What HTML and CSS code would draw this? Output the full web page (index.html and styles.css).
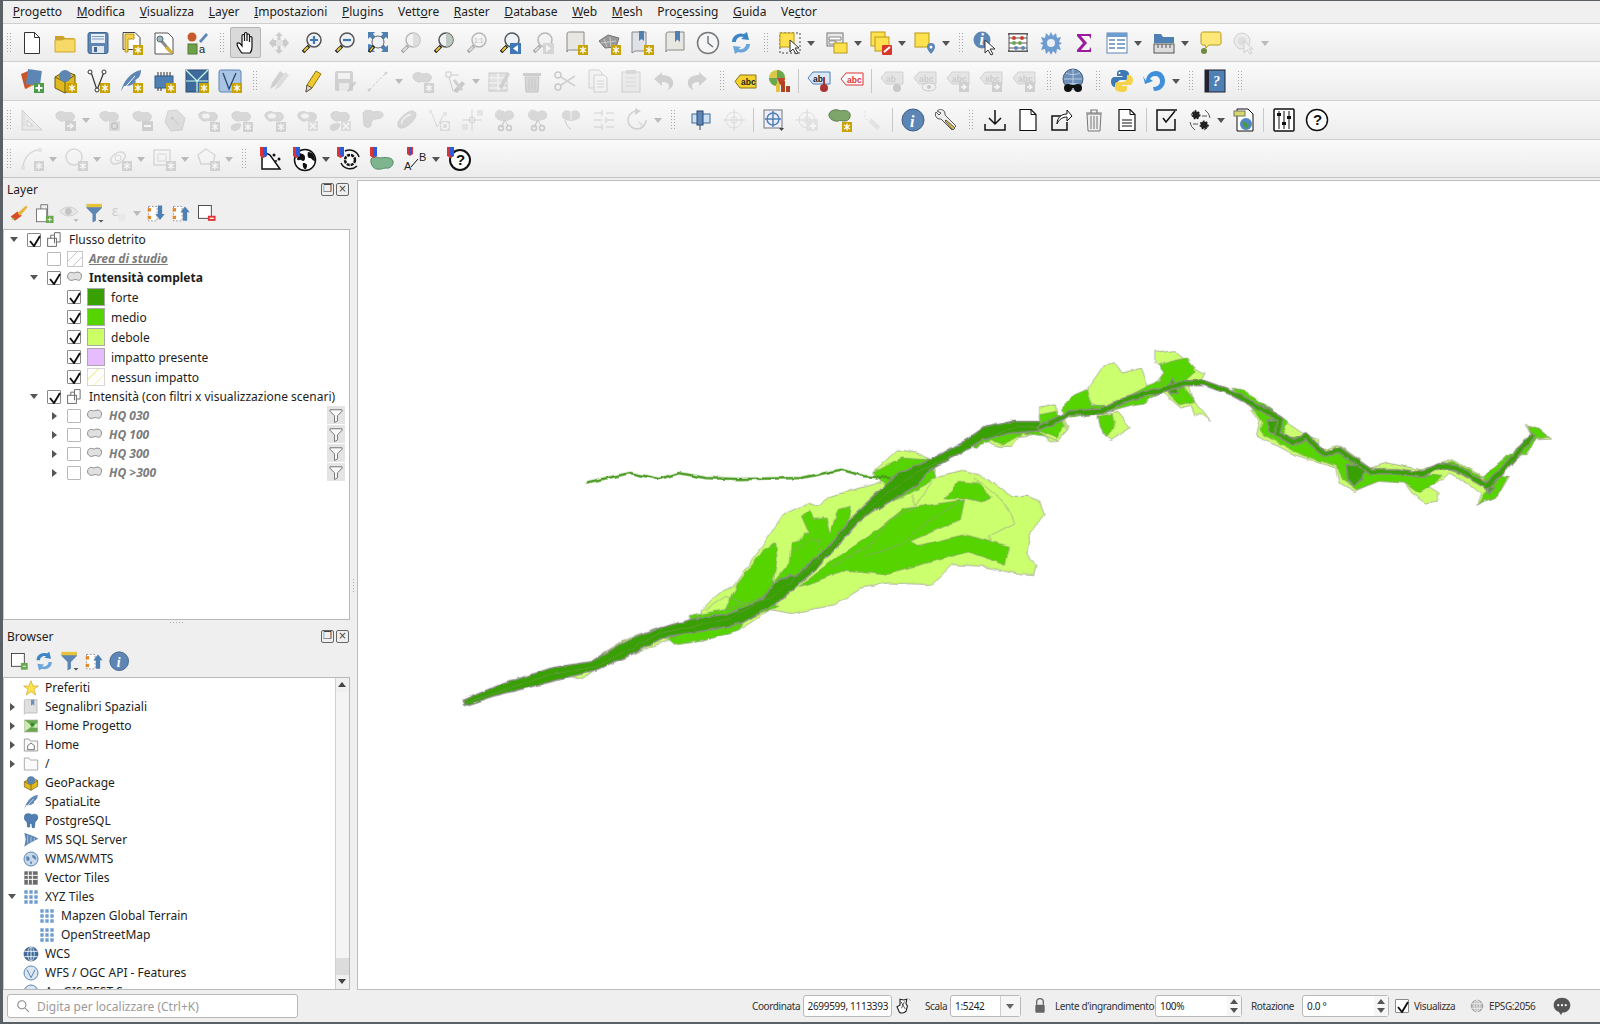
FILE: index.html
```html
<!DOCTYPE html>
<html lang="it">
<head>
    <meta charset="UTF-8">
    <title>QGIS</title>
    <link rel="stylesheet" href="styles.css">
</head>
<body>
<svg class="defs" width="0" height="0">
<defs>
    <!-- bordi irregolari della mappa -->
    <filter id="org" filterUnits="userSpaceOnUse" x="358" y="181" width="1242" height="809">
        <feTurbulence type="fractalNoise" baseFrequency=".09" numOctaves="2" seed="4" result="n"/>
        <feDisplacementMap in="SourceGraphic" in2="n" scale="4" xChannelSelector="R" yChannelSelector="G"/>
        <feGaussianBlur stdDeviation=".35"/>
    </filter>

    <!-- badges -->
    <g id="sb"><rect x="14" y="14" width="10" height="10" fill="#c9a300"/><path d="M19 15.500v7M16 17l6 4M22 17l-6 4" stroke="#fff" stroke-width="1.300"/></g>
    <g id="bl"><path d="M3 6c2-3 7-3 9-1 3-1 8-1 9 2 1 3-1 6-4 6-3 0-5-1-7 0-3 1-8-3-7-7z" fill="#aaa" stroke="#999"/></g>
    <g id="mag"><path d="M9 15L3 21" stroke="#222" stroke-width="3.500"/><path d="M8 16L4 20" stroke="#e8c23a" stroke-width="2"/><circle cx="14" cy="9" r="7" fill="#eef2f6" stroke="#555" stroke-width="1.500"/></g>

    <!-- row 1 -->
    <g id="new"><path d="M4.500 1.500h10l5 5v16h-15z" fill="#fff" stroke="#333"/><path d="M14.500 1.500v5h5" fill="none" stroke="#333"/></g>
    <g id="open"><path d="M2 5h8l2 2h9v4H2z" fill="#c9a227"/><path d="M2 21V9h7l2-1h11v13z" fill="#f6d966" stroke="#cfa92c"/></g>
    <g id="save"><rect x="2" y="1.500" width="20" height="21" rx="2" fill="#5d86b5" stroke="#40658f"/><rect x="5" y="3" width="14" height="9" fill="#e8eef5"/><path d="M6 5.500h12M6 8h12" stroke="#7d9cc0"/><rect x="6" y="15" width="12" height="7" fill="#dfe5ea"/><rect x="8" y="16" width="3" height="5" fill="#40658f"/></g>
    <g id="lnew"><path d="M4 1.500h12l5 5v12H4z" fill="#fff" stroke="#444"/><path d="M6 3v18h3V8h6V3z" fill="#f4cf4a" stroke="#b9961c"/><use href="#sb"/></g>
    <g id="lmgr"><path d="M3 2h13l5 5v16H3z" fill="#fff" stroke="#555"/><path d="M7 7l11 13" stroke="#8a8a8a" stroke-width="3"/><path d="M14 16l6 6" stroke="#d8b22c" stroke-width="3"/><circle cx="8" cy="8" r="3" fill="#9bb" stroke="#567"/></g>
    <g id="style"><circle cx="7" cy="6" r="4.500" fill="#c85a2e"/><path d="M14 10l7-8 2 2-7 8z" fill="#5d86b5"/><rect x="3" y="13" width="9" height="10" fill="#6ea04a" stroke="#4c7a30"/><text x="14" y="22" class="ic-t">a</text></g>
    <g id="pan"><path d="M8 22c-2-2-5-7-5-9 0-1.500 2-1.500 3-.5l2 2.500V5c0-2 2.500-2 2.500 0v5V3c0-2 2.500-2 2.500 0v7V4.500c0-2 2.500-2 2.500 0V11V7c0-2 2.500-2 2.500 0v9c0 3-1 5-2 6z" fill="#fff" stroke="#111" stroke-width="1.200"/></g>
    <g id="panto"><path d="M12 1l4 4h-2.500v4h4V6.500l4.500 5.500-4.500 5.500V15h-4v4H16l-4 4-4-4h2.500v-4h-4v2.500L2 12l4.500-5.500V9h4V5H8z" fill="#8d8d8d"/><rect x="9" y="9" width="7" height="6" fill="#ccc"/></g>
    <g id="zin"><use href="#mag"/><path d="M14 5v8M10 9h8" stroke="#3f78b5" stroke-width="2.200"/></g>
    <g id="zout"><use href="#mag"/><path d="M10 9h8" stroke="#3f78b5" stroke-width="2.200"/></g>
    <g id="zfull"><path d="M2 1h7L7 3l3 3-3 3-3-3-2 2zM22 1h-7l2 2-3 3 3 3 3-3 2 2zM22 21h-7l2-2-3-3 3-3 3 3 2-2z" fill="#4f80b3"/><path d="M2 13v8h7l-2-2 2-2-2-3z" fill="#4f80b3"/><circle cx="12" cy="11" r="6" fill="#eef2f6" stroke="#666"/><path d="M8 15L3 21" stroke="#222" stroke-width="3"/><path d="M7 16l-3 4" stroke="#e8c23a" stroke-width="1.600"/></g>
    <g id="zsel"><use href="#mag"/><path d="M14 2a7 7 0 0 1 0 14z" fill="#bbb"/></g>
    <g id="zlay"><use href="#mag"/><path d="M14 2a7 7 0 0 1 0 14z" fill="#bcc8c0"/></g>
    <g id="z11"><use href="#mag"/><text x="9" y="12" class="ic-t ic-s">1:1</text></g>
    <g id="zlast"><use href="#mag"/><rect x="12" y="12" width="11" height="11" fill="#3f78b5"/><path d="M20 14l-5 3.500 5 3.500z" fill="#fff"/></g>
    <g id="znext"><use href="#mag"/><rect x="12" y="12" width="11" height="11" fill="#aaa"/><path d="M15 14l5 3.500-5 3.500z" fill="#fff"/></g>
    <g id="scroll"><path d="M3 3c0-2 2-2 3-2h14v18H7c-2 0-4 0-4 2z" fill="#e8e6e0" stroke="#888"/><use href="#sb"/></g>
    <g id="map3d"><path d="M2 10l9-6 11 3-3 9-11 1z" fill="#999" stroke="#777"/><path d="M7 8l3 8M13 6l1 10M4 12l15-2" stroke="#ccc"/><use href="#sb"/></g>
    <g id="bmnew"><path d="M2 1h14v19H5l-3 2z" fill="#dfe3e8" stroke="#888"/><path d="M9 0h5v10l-2.500-2L9 10z" fill="#4f80b3"/><use href="#sb"/></g>
    <g id="bms"><path d="M3 3c0-2 2-2 3-2h15v18H7c-2 0-4 0-4 2z" fill="#e8e6e0" stroke="#888"/><path d="M12 0h5v11l-2.500-2.500L12 11z" fill="#4f80b3"/></g>
    <g id="clock"><circle cx="12" cy="12" r="10.500" fill="#f3f5f7" stroke="#777" stroke-width="1.500"/><path d="M12 5v7l5 4" fill="none" stroke="#666" stroke-width="1.300"/></g>
    <g id="refresh"><path d="M3 11C3 5 9 1 15 3l3-2 2 8-8-1 2.500-2C11 5 7 7 7 11z" fill="#3c86c6"/><path d="M21 13c0 6-6 10-12 8l-3 2-2-8 8 1-2.500 2c3.500 1 7.500-1 7.500-5z" fill="#6aa6da"/></g>
    <g id="sel"><rect x="2" y="2" width="20" height="20" fill="none" stroke="#444" stroke-dasharray="2 2"/><rect x="2" y="2" width="14" height="14" fill="#ffe14d" stroke="#b79a1a"/><path d="M12 9v12l3-3 3 5 2-1-3-5h4z" fill="#fff" stroke="#333"/></g>
    <g id="self"><rect x="2" y="2" width="16" height="13" fill="#e8e8e8" stroke="#777"/><path d="M4 6h12v3H4zM4 10h7v3H4z" fill="#fff" stroke="#888"/><rect x="9" y="12" width="13" height="10" fill="#ffe14d" stroke="#b79a1a"/></g>
    <g id="desel"><rect x="2" y="1" width="14" height="14" fill="#ffe14d" stroke="#b79a1a"/><rect x="6" y="6" width="14" height="14" fill="#ffe14d" stroke="#b79a1a"/><rect x="13" y="14" width="10" height="10" rx="1" fill="#d8382c"/><path d="M15 21l6-5" stroke="#fff" stroke-width="2"/></g>
    <g id="selloc"><rect x="2" y="2" width="14" height="14" fill="#ffe14d" stroke="#b79a1a"/><path d="M18 12a4 4 0 0 1 4 4c0 3-4 7-4 7s-4-4-4-7a4 4 0 0 1 4-4z" fill="#5d86b5"/><circle cx="18" cy="16" r="1.500" fill="#fff"/></g>
    <g id="ident"><circle cx="9" cy="9" r="8.500" fill="#5d86b5"/><text x="6.500" y="14" class="ic-w">i</text><path d="M12 9v13l3-3 3 5 2-1-3-5h5z" fill="#fff" stroke="#333"/></g>
    <g id="abacus"><path d="M2 3h20M2 20h20" stroke="#333" stroke-width="1.500"/><rect x="3" y="3" width="18" height="17" fill="#fff" stroke="#555"/><path d="M3 7h18M3 12h18M3 17h18" stroke="#555"/><circle cx="8" cy="7" r="2" fill="#c8412f"/><circle cx="16" cy="7" r="2" fill="#c8412f"/><circle cx="8" cy="12" r="2" fill="#6aa84f"/><circle cx="14" cy="12" r="2" fill="#6aa84f"/><circle cx="10" cy="17" r="2" fill="#5d86b5"/><circle cx="17" cy="17" r="2" fill="#5d86b5"/></g>
    <g id="gear"><path d="M12 1l2 4 3-3 1 5 4-1-2 5 3 1-3 2 2 5-4-1-1 5-3-3-2 4-2-4-3 3-1-5-4 1 2-5-3-2 3-1-2-5 4 1 1-5 3 3z" fill="#6d9cd0"/><circle cx="12" cy="12" r="4" fill="#eaf0f7"/></g>
    <g id="sigma"><path d="M5 3h14v5l-2-3H9l6 7-6 7h8l2-3v5H5v-2l6-7-6-7z" fill="#9b1aa0"/></g>
    <g id="table"><rect x="2" y="2" width="20" height="20" fill="#fff" stroke="#5d86b5"/><rect x="2" y="2" width="20" height="4" fill="#6d9cd0"/><path d="M4 9h6M4 13h6M4 17h6M12 9h8M12 13h8M12 17h8" stroke="#5d86b5" stroke-width="1.500"/></g>
    <g id="meas"><path d="M2 3h7l2 3h11v6H2z" fill="#4f80b3"/><rect x="2" y="13" width="20" height="9" fill="#ddd" stroke="#555"/><path d="M6 13v4M10 13v4M14 13v4M18 13v4" stroke="#555"/></g>
    <g id="tip"><path d="M2 3c0-1 1-2 2-2h16c1 0 2 1 2 2v9c0 1-1 2-2 2H10l-3 3-1-3H4c-1 0-2-1-2-2z" fill="#ffe87a" stroke="#b39a1a"/><circle cx="5" cy="20" r="3" fill="#6f8a3c"/></g>
    <g id="meta"><circle cx="10" cy="10" r="8" fill="#ddd" stroke="#999"/><circle cx="10" cy="10" r="4" fill="#bbb"/><path d="M12 10v12l3-3 3 4 2-1-3-4h4z" fill="#eee" stroke="#999"/></g>

    <!-- row 2 -->
    <g id="dsm"><path d="M3 6l9-3 2 13-8 4z" fill="#e08a2c"/><path d="M1 5l7-3 3 14-6 4z" fill="#c8552b"/><rect x="7" y="1" width="14" height="15" fill="#5d86b5" transform="rotate(8 14 8)"/><rect x="14" y="14" width="10" height="10" fill="#4f9a4a"/><path d="M19 15.500v7M15.500 19h7" stroke="#fff" stroke-width="2"/></g>
    <g id="gpkg"><path d="M2 8l10-6 10 4v12l-10 6-10-5z" fill="#e0b81f" stroke="#6b5a10"/><path d="M2 8l10 5 10-7M12 13v11" fill="none" stroke="#6b5a10"/><circle cx="12" cy="7" r="6" fill="#5d86b5"/><use href="#sb"/></g>
    <g id="shp"><path d="M5 3l6 18 7-18" fill="none" stroke="#333" stroke-width="1.200"/><circle cx="4" cy="3" r="2" fill="#fff" stroke="#333"/><circle cx="18" cy="3" r="2" fill="#fff" stroke="#333"/><circle cx="11" cy="21" r="2" fill="#fff" stroke="#333"/><use href="#sb"/></g>
    <g id="feather"><path d="M2 23C4 12 12 3 22 1c0 6-3 9-6 10 1 1 1 2 0 3-4 3-8 3-11 3z" fill="#5d86b5"/><path d="M2 23L16 7" stroke="#fff"/><use href="#sb"/></g>
    <g id="chip"><rect x="3" y="7" width="18" height="12" fill="#4f80b3" stroke="#2e5a8a"/><path d="M6 3v4M9 3v4M12 3v4M15 3v4M18 3v4M6 19v3M9 19v3" stroke="#333"/><use href="#sb"/></g>
    <g id="mesh"><rect x="1" y="1" width="22" height="22" fill="#3f6b9c" stroke="#2a4a70"/><path d="M1 1l11 11L23 1M1 12h22M12 12v11" fill="none" stroke="#cfe" stroke-width="1.200"/><use href="#sb"/></g>
    <g id="virt"><rect x="1" y="1" width="22" height="22" rx="2" fill="#a9c4e4" stroke="#5d86b5"/><path d="M5 4l6 16 7-16" fill="none" stroke="#2a4a70" stroke-width="1.300"/><use href="#sb"/></g>
    <g id="pens"><path d="M3 20l2-6L13 2l4 3-9 12z" fill="#999"/><path d="M8 21l2-6 8-12 4 3-9 12z" fill="#bbb"/></g>
    <g id="pencil"><path d="M6 23l1-7L16 2l5 3-9 14z" fill="#f1c92e" stroke="#8a7416"/><path d="M6 23l1-7 5 3z" fill="#e8d8b8" stroke="#555"/></g>
    <g id="sedit"><rect x="2" y="2" width="18" height="20" rx="2" fill="#999"/><rect x="5" y="4" width="12" height="6" fill="#eee"/><rect x="6" y="14" width="10" height="8" fill="#ddd"/><path d="M14 22l8-10 1 2-8 9z" fill="#888"/></g>
    <g id="line"><path d="M3 21L20 4" stroke="#888" stroke-dasharray="3 2"/><circle cx="3" cy="21" r="1.500" fill="#999"/><circle cx="20" cy="4" r="1.500" fill="#999"/></g>
    <g id="blobs"><use href="#bl"/><use href="#sb"/></g>
    <g id="vtool"><path d="M3 3h5v5H3zM8 6h8M6 8l4 14" fill="none" stroke="#888"/><path d="M10 22l9-10 3 3-8 9z" fill="#888"/><path d="M11 11l8 10" stroke="#999" stroke-width="3"/></g>
    <g id="tedit"><rect x="2" y="4" width="18" height="18" fill="#c8c6b8" stroke="#888"/><path d="M2 9h18M2 14h18M2 19h18M11 4v18" stroke="#fff"/><path d="M12 18l8-15 3 2-8 15z" fill="#999"/></g>
    <g id="trash"><path d="M3 4h18v3H3z" fill="#a88"/><path d="M5 8h14l-1 15H6z" fill="#c4a8a0" stroke="#977"/><path d="M9 10v11M12 10v11M15 10v11" stroke="#977"/></g>
    <g id="cut"><circle cx="5" cy="6" r="3" fill="none" stroke="#888" stroke-width="1.500"/><circle cx="5" cy="18" r="3" fill="none" stroke="#888" stroke-width="1.500"/><path d="M8 8l14 9M8 16l14-9" stroke="#999" stroke-width="1.500"/></g>
    <g id="copy"><path d="M3 1h10l3 3v15H3z" fill="#eee" stroke="#999"/><path d="M8 6h10l3 3v14H8z" fill="#f4f4f4" stroke="#999"/><path d="M11 12h7M11 15h7M11 18h7" stroke="#aaa"/></g>
    <g id="paste"><rect x="3" y="3" width="18" height="20" fill="#ddd" stroke="#999"/><rect x="7" y="1" width="10" height="4" fill="#aaa"/><path d="M7 9h10M7 13h10M7 17h10" stroke="#aaa"/></g>
    <g id="undo"><path d="M10 3L2 10l8 7v-4c4 0 7 1 7 4 0 2-1 3-2 4 4-1 7-4 6-9-1-4-6-6-11-6z" fill="#999"/></g>
    <g id="redo"><path d="M14 3l8 7-8 7v-4c-4 0-7 1-7 4 0 2 1 3 2 4-4-1-7-4-6-9 1-4 6-6 11-6z" fill="#999"/></g>
    <g id="labelabc"><path d="M6 6h16v13H6l-5-6.500z" fill="#f4d22e" stroke="#8a7416"/><text x="7" y="16" class="ic-t ic-b">abc</text></g>
    <g id="diag"><circle cx="10" cy="9" r="8" fill="#d8c84a"/><path d="M10 9V1a8 8 0 0 1 8 8z" fill="#6aa84f"/><path d="M10 9h8a8 8 0 0 1-5 7z" fill="#c8412f"/><path d="M10 9v8a8 8 0 0 1-8-8z" fill="#6aa84f"/><rect x="9" y="15" width="4" height="8" fill="#e8c23a"/><rect x="14" y="12" width="4" height="11" fill="#a42"/><rect x="19" y="17" width="4" height="6" fill="#a42"/></g>
    <g id="abpin"><path d="M6 3h17v12H6l-5-6z" fill="#d8e8f8" stroke="#4f80b3"/><text x="6" y="13" class="ic-t ic-b">ab</text><path d="M17 8v9" stroke="#a33" stroke-width="2"/><circle cx="17" cy="19" r="4" fill="#a33"/></g>
    <g id="abcred"><path d="M6 4h17v12H6l-5-6z" fill="#fff" stroke="#d33"/><text x="7" y="14" class="ic-t ic-b ic-r">abc</text></g>
    <g id="aboff"><path d="M6 3h17v12H6l-5-6z" fill="#ccc" stroke="#999"/><text x="6" y="13" class="ic-t ic-b ic-g">ab</text><circle cx="17" cy="19" r="4" fill="#888"/></g>
    <g id="aboff2"><path d="M6 3h17v12H6l-5-6z" fill="#ccc" stroke="#999"/><text x="6" y="13" class="ic-t ic-b ic-g">abc</text><ellipse cx="16" cy="18" rx="7" ry="4" fill="#eee" stroke="#888"/><circle cx="16" cy="18" r="2" fill="#888"/></g>
    <g id="aboff3"><path d="M6 3h17v12H6l-5-6z" fill="#ccc" stroke="#999"/><text x="6" y="13" class="ic-t ic-b ic-g">abc</text><rect x="13" y="13" width="10" height="10" fill="#999"/><path d="M15 18h4M17 15.500l3 2.500-3 2.500" fill="none" stroke="#fff" stroke-width="1.500"/></g>
    <g id="globebin"><circle cx="12" cy="10" r="10" fill="#6d8fb8" stroke="#3f6088"/><path d="M3 10h18M12 0v20M5 4c4 2 10 2 14 0M5 16c4-2 10-2 14 0" stroke="#b8cce0" fill="none"/><circle cx="7" cy="19" r="4" fill="#111"/><circle cx="17" cy="19" r="4" fill="#111"/><rect x="9" y="16" width="6" height="3" fill="#111"/></g>
    <g id="python"><path d="M12 1C7 1 7 3 7 5v2h5.500v1H5C2 8 1 10 1 13s2 5 4 5h2v-3c0-2 2-4 4-4h5c2 0 3-1 3-3V5c0-2-2-4-7-4z" fill="#3d7ab5"/><path d="M12 23c5 0 5-2 5-4v-2h-5v-1h7c3 0 4-2 4-5s-2-5-4-5h-2v3c0 2-2 4-4 4H8c-2 0-3 1-3 3v3c0 2 2 4 7 4z" fill="#f4d24a"/><circle cx="9.500" cy="4" r="1" fill="#fff"/></g>
    <g id="pluginre"><path d="M3 12C3 6 8 2 13 2s9 4 9 10c0 5-4 10-11 10l-1-4c4 0 7-2 7-6 0-3-2-5-5-5-2 0-4 1-5 3l3 2-8 3-2-8z" fill="#3f8fdb"/></g>
    <g id="helpbook"><rect x="2" y="1" width="20" height="22" fill="#4f80b3" stroke="#223"/><rect x="2" y="1" width="4" height="22" fill="#223"/><text x="10" y="17" class="ic-w ic-wm">?</text></g>

    <!-- row 3 -->
    <g id="ruler"><path d="M2 2v20h20z" fill="#ddd" stroke="#999"/><path d="M7 12v6h6z" fill="#f4f4f4" stroke="#999"/><path d="M3 5h2M3 8h2M3 11h2M3 14h2M3 17h2" stroke="#999"/></g>
    <g id="bmove"><use href="#bl"/><rect x="12" y="13" width="11" height="10" fill="#999"/><path d="M14 18h5M17 15.500l3 2.500-3 2.500" fill="none" stroke="#fff" stroke-width="1.500"/></g>
    <g id="brot"><use href="#bl"/><rect x="12" y="13" width="11" height="10" fill="#bbb"/><circle cx="17.500" cy="18" r="3" fill="none" stroke="#777" stroke-width="1.500"/></g>
    <g id="bscale"><use href="#bl"/><rect x="12" y="13" width="11" height="10" fill="#999"/><path d="M14 18h7" stroke="#fff" stroke-width="2"/></g>
    <g id="hex"><path d="M5 3l9-1 8 8-3 12-11 1-6-9z" fill="#bbb" stroke="#999"/><path d="M9 10l7 7" stroke="#888"/><circle cx="9" cy="10" r="1.500" fill="#888"/></g>
    <g id="ring"><use href="#bl"/><ellipse cx="10" cy="8" rx="4" ry="2.500" fill="#eee"/><use href="#sb"/></g>
    <g id="part"><use href="#bl"/><path d="M2 18c2-3 8-4 10-2 1 3-3 7-6 7-3 0-5-2-4-5z" fill="#aaa"/><use href="#sb"/></g>
    <g id="ringx"><use href="#bl"/><ellipse cx="10" cy="8" rx="4" ry="2.500" fill="#eee"/><rect x="13" y="13" width="10" height="10" fill="#bbb"/><path d="M15 15l6 6M21 15l-6 6" stroke="#fff" stroke-width="1.500"/></g>
    <g id="partx"><use href="#bl"/><path d="M2 18c2-3 8-4 10-2 1 3-3 7-6 7-3 0-5-2-4-5z" fill="#aaa"/><rect x="13" y="13" width="10" height="10" fill="#bbb"/><path d="M15 15l6 6M21 15l-6 6" stroke="#fff" stroke-width="1.500"/></g>
    <g id="reshape"><path d="M2 5c2-4 8-3 10-1 3-1 9-1 10 2 1 4-5 5-8 5-2 0-4 3-4 6 0 3-6 3-7 0z" fill="#aaa" stroke="#999"/></g>
    <g id="offs"><path d="M4 18C2 12 14 2 19 3s3 7-1 11-12 9-14 4z" fill="#aaa" stroke="#999"/><path d="M8 16C6 13 14 6 17 7" fill="none" stroke="#eee" stroke-width="1.500"/></g>
    <g id="vproc"><path d="M4 3l6 16 7-13" fill="none" stroke="#aaa"/><rect x="2" y="2" width="3" height="3" fill="#ccc"/><rect x="16" y="4" width="4" height="4" fill="#ccc"/><rect x="13" y="13" width="10" height="10" fill="#bbb"/><circle cx="18" cy="18" r="3" fill="none" stroke="#fff" stroke-width="1.500"/></g>
    <g id="split"><path d="M12 1v22M2 12h20" stroke="#aaa"/><circle cx="12" cy="12" r="3" fill="none" stroke="#999"/><rect x="17" y="2" width="6" height="6" fill="#ccc"/><rect x="2" y="16" width="6" height="6" fill="#ccc"/></g>
    <g id="scis"><path d="M7 2c-4 0-5 4-4 7 1 2 4 4 8 3 0 3-3 5-3 8" fill="none" stroke="#888"/><path d="M3 6c1-4 6-5 9-2 3-3 8-2 9 2s-2 6-9 7C5 12 2 10 3 6z" fill="#aaa"/><circle cx="8" cy="20" r="2.500" fill="none" stroke="#888" stroke-width="1.500"/><circle cx="16" cy="20" r="2.500" fill="none" stroke="#888" stroke-width="1.500"/><path d="M9 18l3-6 3 6" fill="none" stroke="#888"/></g>
    <g id="scis2"><path d="M3 6c1-4 6-5 9-2 3-3 8-2 9 2s-2 6-9 7C5 12 2 10 3 6z" fill="#aaa"/><path d="M12 4v8" stroke="#eee"/><path d="M6 12c1 4 3 8 6 9" fill="none" stroke="#888"/></g>
    <g id="rows"><path d="M2 5h8M14 5h8M2 12h8M14 12h8M2 19h8M14 19h8M10 2v6M14 9v6M10 16v6" stroke="#999"/></g>
    <g id="curve"><path d="M12 3a9 9 0 1 0 9 9" fill="none" stroke="#999" stroke-width="1.500"/><path d="M10 0l6 3-6 4z" fill="#999"/><path d="M12 12l7 5-3 1z" fill="#bbb"/></g>
    <g id="align"><rect x="3" y="6" width="18" height="9" fill="#cfe0f0" stroke="#3f6b9c"/><rect x="8" y="3" width="6" height="14" fill="#5d86b5" stroke="#2a4a70"/><path d="M11 17v5" stroke="#2a4a70"/></g>
    <g id="cross"><circle cx="12" cy="12" r="8" fill="none" stroke="#bbb"/><path d="M12 1v22M1 12h22" stroke="#aaa"/><circle cx="12" cy="12" r="3" fill="none" stroke="#bbb"/></g>
    <g id="snapg"><rect x="2" y="2" width="18" height="18" fill="#eef" stroke="#777"/><circle cx="11" cy="11" r="6" fill="none" stroke="#4f80b3" stroke-width="1.500"/><path d="M11 3v16M3 11h16" stroke="#4f80b3" stroke-width="1.500"/><path d="M17 20h5l-2.500 3z" fill="#444"/></g>
    <g id="crossp"><use href="#cross"/><rect x="13" y="13" width="10" height="10" fill="#ccc"/><path d="M18 15v6M15 18h6" stroke="#fff" stroke-width="2"/></g>
    <g id="gblob"><path d="M1 6c2-5 9-5 11-3 3-1 9-1 10 3 1 4-2 7-5 7-3 0-5-1-7 0-3 1-10-2-9-7z" fill="#7ea56a" stroke="#5a7d4a"/><use href="#sb"/></g>
    <g id="dpath"><path d="M4 3v7l8 8" fill="none" stroke="#bbb" stroke-dasharray="2 2"/><path d="M10 10l9 9-3 3-8-8z" fill="#ccc"/></g>
    <g id="info"><circle cx="12" cy="12" r="11" fill="#5d86b5" stroke="#3f6088"/><text x="9" y="19" class="ic-w">i</text></g>
    <g id="wrench"><path d="M3 3c2-2 5-2 7 0 1 1 1 3 1 4l11 11-4 4L7 11c-1 0-3 0-4-1C1 8 1 6 2 4l3 3 2-2z" fill="#eee" stroke="#555"/><path d="M12 12l9 8-2 2-8-9z" fill="#e8c23a" stroke="#555"/></g>
    <g id="down"><path d="M12 2v14M6 10l6 6 6-6M2 16v6h20v-6" fill="none" stroke="#111" stroke-width="1.500"/></g>
    <g id="doc"><path d="M4 1.500h11l5 5v16H4z" fill="#fff" stroke="#111" stroke-width="1.200"/><path d="M15 1.500v5h5" fill="none" stroke="#111"/></g>
    <g id="share"><path d="M16 8H3v14h15V14" fill="none" stroke="#111" stroke-width="1.500"/><path d="M8 16c0-6 4-10 10-10V2l5 6-5 5V9c-4 0-8 2-10 7z" fill="#fff" stroke="#111"/></g>
    <g id="bin"><path d="M4 5h16M9 5V2h6v3" fill="none" stroke="#777" stroke-width="1.200"/><path d="M5 6h14l-1 17H6z" fill="#eee" stroke="#777"/><path d="M9 8v13M12 8v13M15 8v13" stroke="#777"/></g>
    <g id="doct"><use href="#doc"/><path d="M7 12h10M7 15h10M7 18h10" stroke="#111" stroke-width="1.200"/></g>
    <g id="check"><path d="M20 11v11H2V2h20" fill="none" stroke="#111" stroke-width="1.500"/><path d="M8 10l3 4 9-11" fill="none" stroke="#111" stroke-width="1.500"/></g>
    <g id="bugs"><path d="M17 2a11 11 0 0 1 5 8M7 22a11 11 0 0 1-5-8M3 7a11 11 0 0 1 5-5M21 17a11 11 0 0 1-5 5" fill="none" stroke="#555"/><circle cx="8" cy="7" r="3.500" fill="#222" stroke="#222" stroke-dasharray="1.500 1.500" stroke-width="2"/><circle cx="16" cy="17" r="3.500" fill="#222" stroke="#222" stroke-dasharray="1.500 1.500" stroke-width="2"/><path d="M14 8h5M5 16h5" stroke="#555"/></g>
    <g id="gdoc"><path d="M5 1h11l5 5v17H5z" fill="#fff" stroke="#111"/><rect x="2" y="3" width="11" height="5" fill="#d8d86a" stroke="#776"/><circle cx="14" cy="16" r="6" fill="#4f88c8"/><path d="M10 14c3-2 4 2 6 2s0 4-2 5z" fill="#4c9a3c"/></g>
    <g id="slid"><rect x="2" y="1" width="20" height="22" rx="1" fill="#fff" stroke="#111" stroke-width="1.500"/><path d="M7 3v18M12 3v18M17 3v18" stroke="#111"/><rect x="5" y="5" width="4" height="3" fill="#111"/><rect x="10" y="14" width="4" height="3" fill="#111"/><rect x="15" y="8" width="4" height="3" fill="#111"/></g>
    <g id="qhelp"><circle cx="12" cy="12" r="10.500" fill="#fff" stroke="#111" stroke-width="1.500"/><text x="8" y="17" class="ic-k">?</text></g>

    <!-- row 4 -->
    <g id="arcv"><path d="M3 22C3 11 10 3 20 3" fill="none" stroke="#aaa" stroke-width="1.500"/><rect x="1" y="19" width="4" height="4" fill="#ccc"/><rect x="18" y="1" width="4" height="4" fill="#ccc"/><use href="#sb"/></g>
    <g id="circ"><circle cx="10" cy="10" r="8" fill="none" stroke="#aaa" stroke-width="1.500"/><use href="#sb"/></g>
    <g id="ell"><ellipse cx="10" cy="11" rx="8" ry="5" fill="none" stroke="#aaa" stroke-width="1.500" transform="rotate(-30 10 11)"/><circle cx="10" cy="11" r="3" fill="none" stroke="#aaa"/><use href="#sb"/></g>
    <g id="rect"><rect x="2" y="3" width="16" height="15" fill="none" stroke="#aaa" stroke-width="1.500"/><rect x="6" y="7" width="8" height="7" fill="none" stroke="#aaa"/><use href="#sb"/></g>
    <g id="reg"><path d="M10 2l9 6-2 9H5L2 8z" fill="none" stroke="#aaa" stroke-width="1.500"/><use href="#sb"/></g>
    <g id="rib"><path d="M0 0h7v9l-3.500 2L0 9z" fill="#d33"/><path d="M3 0h4v9l-2 1-2-2z" fill="#2a5bdc"/></g>
    <g id="rterrain"><path d="M2 4v18h18L10 8z" fill="#fff" stroke="#111" stroke-width="1.500"/><circle cx="14" cy="8" r="1.500" fill="#111"/><circle cx="19" cy="12" r="1.500" fill="#111"/><circle cx="16" cy="14" r="1" fill="#111"/><use href="#rib"/></g>
    <g id="rglobe"><circle cx="12" cy="13" r="10.500" fill="#fff" stroke="#111" stroke-width="1.500"/><path d="M6 6c4 1 6 1 6 5s-3 3-4 2-3 2-4-1zM15 5c5 0 7 4 7 9-3 0-3-3-5-3s-3-2-2-6zM10 16c4 0 5 2 3 6-2 1-4-3-3-6z" fill="#111"/><use href="#rib"/></g>
    <g id="rgear"><circle cx="13" cy="13" r="5" fill="#fff" stroke="#111" stroke-width="2.500" stroke-dasharray="3 1"/><path d="M4 16a10 10 0 0 0 16 3M22 10A10 10 0 0 0 8 4" fill="none" stroke="#111" stroke-width="1.500"/><use href="#rib"/></g>
    <g id="rblob"><path d="M1 12c2-3 6-2 9-1 4-1 12-1 13 3s-3 8-7 7c-4 0-5 2-9 1-4 0-7-6-6-10z" fill="#7fb58e" stroke="#5a8a6a"/><use href="#rib"/></g>
    <g id="rab"><path d="M4 0h6v7l-3 2-3-2z" fill="#d33"/><path d="M6 0h3v7l-2 1-1-1z" fill="#2a5bdc"/><text x="1" y="23" class="ic-t">A</text><path d="M8 20L15 12" stroke="#111"/><text x="16" y="14" class="ic-t">B</text></g>
    <g id="rq"><circle cx="13" cy="13" r="10" fill="#fff" stroke="#111" stroke-width="2"/><text x="9" y="18" class="ic-k">?</text><use href="#rib"/></g>

    <!-- panels -->
    <g id="brush"><path d="M2 16l8-6 5 5-8 6z" fill="#d84a2a"/><path d="M10 12L20 3l2 2-9 10z" fill="#e8b43a"/><path d="M3 19l4-1" stroke="#6c3"/></g>
    <g id="addgroup"><rect x="3" y="7" width="12" height="15" fill="#fff" stroke="#666"/><path d="M8 7V2h8v14h-1" fill="none" stroke="#666"/><rect x="14" y="15" width="9" height="9" fill="#6aa84f"/><path d="M18.500 17v5M16 19.500h5" stroke="#fff"/></g>
    <g id="eye"><path d="M1 10c6-7 15-7 21 0-6 7-15 7-21 0z" fill="#ddd" stroke="#888"/><circle cx="11" cy="10" r="4" fill="#5d86b5"/><path d="M17 19h6l-3 3z" fill="#555"/></g>
    <g id="filter"><path d="M3 3h18v3l-7 7v8l-4 2V13L3 6z" fill="#5d86b5"/><path d="M3 1h18v4H3z" fill="#e8c23a"/><path d="M17 20h6l-3 3z" fill="#555"/></g>
    <g id="eps"><text x="3" y="15" class="ic-e">ε</text><rect x="11" y="13" width="8" height="8" fill="#ddd"/></g>
    <g id="expand"><rect x="3" y="4" width="10" height="17" fill="#fff" stroke="#888" stroke-dasharray="2 2"/><rect x="2" y="6" width="4" height="4" fill="#e08a2c"/><rect x="2" y="15" width="4" height="4" fill="#e08a2c"/><path d="M14 3h5v10h3l-5.500 7-5.500-7h3z" fill="#4f80b3"/></g>
    <g id="collapse"><rect x="3" y="4" width="10" height="17" fill="#fff" stroke="#888" stroke-dasharray="2 2"/><rect x="2" y="6" width="4" height="4" fill="#e08a2c"/><rect x="2" y="15" width="4" height="4" fill="#e08a2c"/><path d="M14 21h5V11h3l-5.500-7-5.500 7h3z" fill="#4f80b3"/></g>
    <g id="rmlayer"><rect x="3" y="3" width="15" height="15" fill="#fff" stroke="#333"/><rect x="14" y="15" width="9" height="6" fill="#d33"/><path d="M16 18h5" stroke="#fff" stroke-width="1.500"/></g>
    <g id="addfav"><rect x="3" y="3" width="15" height="15" fill="#fff" stroke="#333"/><rect x="14" y="14" width="8" height="8" fill="#6aa84f"/><path d="M16 18h4" stroke="#fff"/></g>
    <g id="groupic"><rect x="1" y="10" width="14" height="13" fill="#fff" stroke="#666" stroke-width="1.500"/><path d="M6 10V5h6v13M12 6V1h9v15h-6" fill="none" stroke="#666" stroke-width="1.500"/></g>
    <g id="polyic"><path d="M1 9c1-6 7-6 10-4 3-2 11-3 12 3 1 6-3 10-6 8-3-1-5-1-7 0-4 2-10-1-9-7z" fill="#e0e0e0" stroke="#8a8a8a" stroke-width="1.600"/></g>
    <g id="funnel"><path d="M4 5h16v2l-6 6v7l-4 2v-9L4 7z" fill="#f8f8f8" stroke="#777" stroke-width="1.300"/></g>
    <g id="star"><path d="M12 1l3 8h8l-6.500 5 2.500 8.500L12 17.500 5 22.500 7.500 14 1 9h8z" fill="#ffe14d" stroke="#c9a227"/></g>
    <g id="bmk"><path d="M2 3c0-1 1-2 2-2h17v20H5c-2 0-3 1-3 2z" fill="#e0e0e0" stroke="#aaa"/><path d="M12 1h5v9l-2.500-2-2.500 2z" fill="#6d8fb8"/></g>
    <g id="hprog"><rect x="2" y="3" width="20" height="18" fill="#6aa84f" stroke="#aaa"/><path d="M2 3l12 9-12 9zM12 14l10-7v8z" fill="#cde8b0"/><circle cx="14" cy="10" r="3" fill="#2e8b2e"/></g>
    <g id="home"><path d="M2 3h7l2 3h11v15H2z" fill="#fafafa" stroke="#777"/><path d="M7 13l5-4 5 4v6H7z" fill="#fff" stroke="#333"/></g>
    <g id="fold"><path d="M2 3h7l2 3h11v15H2z" fill="#fafafa" stroke="#888"/></g>
    <g id="pkg"><path d="M2 10l10-6 10 4v9l-10 6-10-5z" fill="#e0b81f" stroke="#6b5a10"/><path d="M2 10l10 5 10-7M12 15v8" fill="none" stroke="#6b5a10"/><circle cx="12" cy="8" r="6" fill="#5d86b5"/></g>
    <g id="feat"><path d="M2 23C4 12 12 3 22 1c0 6-3 9-6 10 1 1 1 2 0 3-4 3-8 3-11 3z" fill="#5d86b5"/><path d="M2 23L16 7" stroke="#fff"/></g>
    <g id="pg"><path d="M3 3c3-3 8-2 10 0 3-2 9-2 9 3 0 4-2 6-4 7l-1 9h-3l-1-7-3 1v5H7l-1-8C3 12 1 8 3 3z" fill="#4f7fb3" stroke="#2e5a8a"/></g>
    <g id="mssql"><path d="M2 1c7 3 16 5 21 9-5 3-13 6-21 12l2-11z" fill="#5d86b5"/><path d="M7 5v12M12 7v9M17 9v5" stroke="#cfe0f0"/></g>
    <g id="wms"><circle cx="12" cy="12" r="10.500" fill="#c8d8e8" stroke="#5d86b5" stroke-width="1.500"/><path d="M5 8c3 0 5 1 5 4s-2 2-3 3-3-3-2-7zM14 6c4 0 6 3 6 7-2 0-3-1-4-2s-3-1-2-5zM11 15c2 0 3 2 2 5-2 0-3-2-2-5z" fill="#5d86b5"/></g>
    <g id="vtile"><rect x="2" y="2" width="20" height="20" fill="#6a6a6a"/><path d="M2 8h20M2 14h20M8 2v20M14 2v20" stroke="#fff" stroke-width="1.500"/></g>
    <g id="xyz"><path d="M2 2h5v5H2zM9.500 2h5v5h-5zM17 2h5v5h-5zM2 9.500h5v5H2zM9.500 9.500h5v5h-5zM17 9.500h5v5h-5zM2 17h5v5H2zM9.500 17h5v5h-5zM17 17h5v5h-5z" fill="#6d9cd0"/></g>
    <g id="wcs"><circle cx="12" cy="12" r="10.500" fill="#3f6b9c" stroke="#2a4a70"/><path d="M2 8h20M2 16h20M12 2v20" stroke="#fff" stroke-width="1.300"/><ellipse cx="12" cy="12" rx="5" ry="10.500" fill="none" stroke="#fff"/></g>
    <g id="wfs"><circle cx="12" cy="12" r="10.500" fill="#dce6f0" stroke="#5d86b5" stroke-width="1.500"/><path d="M6 7l6 12 6-12" fill="none" stroke="#5d86b5" stroke-width="1.500"/></g>
    <g id="noclick"><path d="M8 3l5 1 4-1-1 6 2 3-2 7c-3 3-7 3-9 1L4 13l4-2z" fill="#fff" stroke="#222" stroke-width="1.500"/><path d="M9 6l6 10M14 6l-4 9" stroke="#222"/><path d="M19 2l3 3" stroke="#888"/></g>
    <g id="lock"><path d="M7 10V6a5 5 0 0 1 10 0v4" fill="none" stroke="#666" stroke-width="2"/><rect x="5" y="10" width="14" height="12" rx="1.500" fill="#666"/></g>
    <g id="globe"><circle cx="12" cy="12" r="10" fill="#bbb" stroke="#777"/><path d="M2 8h20M2 16h20M12 2v20" stroke="#fff"/><ellipse cx="12" cy="12" rx="5" ry="10" fill="none" stroke="#fff"/></g>
    <g id="msg"><path d="M12 2c6 0 10 4 10 9s-4 9-10 9l-1 3-3-4c-3-1-6-4-6-8 0-5 4-9 10-9z" fill="#555"/><circle cx="7.500" cy="11" r="1.300" fill="#fff"/><circle cx="12" cy="11" r="1.300" fill="#fff"/><circle cx="16.500" cy="11" r="1.300" fill="#fff"/></g>
    <g id="chk"><path d="M3 8l4 5 6-10" fill="none" stroke="#111" stroke-width="1.900"/></g>
</defs>
</svg>

<div class="app">
    <div class="menubar">
        <span><u>P</u>rogetto</span><span><u>M</u>odifica</span><span><u>V</u>isualizza</span><span><u>L</u>ayer</span><span><u>I</u>mpostazioni</span><span><u>P</u>lugins</span><span>Vett<u>o</u>re</span><span><u>R</u>aster</span><span><u>D</u>atabase</span><span><u>W</u>eb</span><span><u>M</u>esh</span><span>Pro<u>c</u>essing</span><span><u>G</u>uida</span><span>Ve<u>c</u>tor</span>
    </div>

    <div class="toolbar top">
        <i class="grip"></i>
        <b class="btn"><svg><use href="#new"/></svg></b><b class="btn"><svg><use href="#open"/></svg></b><b class="btn"><svg><use href="#save"/></svg></b><b class="btn"><svg><use href="#lnew"/></svg></b><b class="btn"><svg><use href="#lmgr"/></svg></b><b class="btn"><svg><use href="#style"/></svg></b>
        <i class="grip"></i>
        <b class="btn active"><svg><use href="#pan"/></svg></b><b class="btn off"><svg><use href="#panto"/></svg></b><b class="btn"><svg><use href="#zin"/></svg></b><b class="btn"><svg><use href="#zout"/></svg></b><b class="btn"><svg><use href="#zfull"/></svg></b><b class="btn off"><svg><use href="#zsel"/></svg></b><b class="btn"><svg><use href="#zlay"/></svg></b><b class="btn off"><svg><use href="#z11"/></svg></b><b class="btn"><svg><use href="#zlast"/></svg></b><b class="btn off"><svg><use href="#znext"/></svg></b><b class="btn"><svg><use href="#scroll"/></svg></b><b class="btn"><svg><use href="#map3d"/></svg></b><b class="btn"><svg><use href="#bmnew"/></svg></b><b class="btn"><svg><use href="#bms"/></svg></b><b class="btn"><svg><use href="#clock"/></svg></b><b class="btn"><svg><use href="#refresh"/></svg></b>
        <i class="grip"></i>
        <b class="btn"><svg><use href="#sel"/></svg></b><i class="dd wide"></i><b class="btn"><svg><use href="#self"/></svg></b><i class="dd"></i><b class="btn"><svg><use href="#desel"/></svg></b><i class="dd"></i><b class="btn"><svg><use href="#selloc"/></svg></b><i class="dd"></i>
        <i class="grip"></i>
        <b class="btn"><svg><use href="#ident"/></svg></b><b class="btn"><svg><use href="#abacus"/></svg></b><b class="btn"><svg><use href="#gear"/></svg></b><b class="btn"><svg><use href="#sigma"/></svg></b><b class="btn"><svg><use href="#table"/></svg></b><i class="dd wide"></i><b class="btn"><svg><use href="#meas"/></svg></b><i class="dd wide"></i><b class="btn"><svg><use href="#tip"/></svg></b><b class="btn off"><svg><use href="#meta"/></svg></b><i class="dd off"></i>
    </div>

    <div class="toolbar">
        <i class="grip hide"></i>
        <b class="btn"><svg><use href="#dsm"/></svg></b><b class="btn"><svg><use href="#gpkg"/></svg></b><b class="btn"><svg><use href="#shp"/></svg></b><b class="btn"><svg><use href="#feather"/></svg></b><b class="btn"><svg><use href="#chip"/></svg></b><b class="btn"><svg><use href="#mesh"/></svg></b><b class="btn"><svg><use href="#virt"/></svg></b>
        <i class="grip"></i>
        <b class="btn off"><svg><use href="#pens"/></svg></b><b class="btn"><svg><use href="#pencil"/></svg></b><b class="btn off"><svg><use href="#sedit"/></svg></b><b class="btn off"><svg><use href="#line"/></svg></b><i class="dd off"></i><b class="btn off"><svg><use href="#blobs"/></svg></b><b class="btn off"><svg><use href="#vtool"/></svg></b><i class="dd off"></i><b class="btn off"><svg><use href="#tedit"/></svg></b><b class="btn off"><svg><use href="#trash"/></svg></b><b class="btn off"><svg><use href="#cut"/></svg></b><b class="btn off"><svg><use href="#copy"/></svg></b><b class="btn off"><svg><use href="#paste"/></svg></b><b class="btn off"><svg><use href="#undo"/></svg></b><b class="btn off"><svg><use href="#redo"/></svg></b>
        <i class="grip"></i>
        <b class="btn"><svg><use href="#labelabc"/></svg></b><b class="btn"><svg><use href="#diag"/></svg></b><i class="sep"></i><b class="btn"><svg><use href="#abpin"/></svg></b><b class="btn"><svg><use href="#abcred"/></svg></b><i class="sep"></i><b class="btn off"><svg><use href="#aboff"/></svg></b><b class="btn off"><svg><use href="#aboff2"/></svg></b><b class="btn off"><svg><use href="#aboff3"/></svg></b><b class="btn off"><svg><use href="#aboff3"/></svg></b><b class="btn off"><svg><use href="#aboff3"/></svg></b>
        <i class="grip"></i>
        <b class="btn"><svg><use href="#globebin"/></svg></b>
        <i class="grip"></i>
        <b class="btn"><svg><use href="#python"/></svg></b><b class="btn"><svg><use href="#pluginre"/></svg></b><i class="dd"></i>
        <i class="grip"></i>
        <b class="btn"><svg><use href="#helpbook"/></svg></b>
        <i class="grip"></i>
    </div>

    <div class="toolbar">
        <i class="grip"></i>
        <b class="btn off"><svg><use href="#ruler"/></svg></b><b class="btn off"><svg><use href="#bmove"/></svg></b><i class="dd off"></i><b class="btn off"><svg><use href="#brot"/></svg></b><b class="btn off"><svg><use href="#bscale"/></svg></b><b class="btn off"><svg><use href="#hex"/></svg></b><b class="btn off"><svg><use href="#ring"/></svg></b><b class="btn off"><svg><use href="#part"/></svg></b><b class="btn off"><svg><use href="#ring"/></svg></b><b class="btn off"><svg><use href="#ringx"/></svg></b><b class="btn off"><svg><use href="#partx"/></svg></b><b class="btn off"><svg><use href="#reshape"/></svg></b><b class="btn off"><svg><use href="#offs"/></svg></b><b class="btn off"><svg><use href="#vproc"/></svg></b><b class="btn off"><svg><use href="#split"/></svg></b><b class="btn off"><svg><use href="#scis"/></svg></b><b class="btn off"><svg><use href="#scis"/></svg></b><b class="btn off"><svg><use href="#scis2"/></svg></b><b class="btn off"><svg><use href="#rows"/></svg></b><b class="btn off"><svg><use href="#curve"/></svg></b><i class="dd off"></i>
        <i class="grip wide"></i>
        <b class="btn"><svg><use href="#align"/></svg></b><b class="btn off"><svg><use href="#cross"/></svg></b><i class="sep"></i><b class="btn"><svg><use href="#snapg"/></svg></b><b class="btn off"><svg><use href="#crossp"/></svg></b><b class="btn"><svg><use href="#gblob"/></svg></b><b class="btn off"><svg><use href="#dpath"/></svg></b><i class="sep"></i><b class="btn"><svg><use href="#info"/></svg></b><b class="btn"><svg><use href="#wrench"/></svg></b>
        <i class="grip"></i>
        <b class="btn"><svg><use href="#down"/></svg></b><b class="btn"><svg><use href="#doc"/></svg></b><b class="btn"><svg><use href="#share"/></svg></b><b class="btn"><svg><use href="#bin"/></svg></b><b class="btn"><svg><use href="#doct"/></svg></b><i class="sep"></i><b class="btn"><svg><use href="#check"/></svg></b><b class="btn"><svg><use href="#bugs"/></svg></b><i class="dd"></i><b class="btn"><svg><use href="#gdoc"/></svg></b><i class="sep"></i><b class="btn"><svg><use href="#slid"/></svg></b><b class="btn"><svg><use href="#qhelp"/></svg></b>
    </div>

    <div class="toolbar last">
        <i class="grip"></i>
        <b class="btn off"><svg><use href="#arcv"/></svg></b><i class="dd off"></i><b class="btn off"><svg><use href="#circ"/></svg></b><i class="dd off"></i><b class="btn off"><svg><use href="#ell"/></svg></b><i class="dd off"></i><b class="btn off"><svg><use href="#rect"/></svg></b><i class="dd off"></i><b class="btn off"><svg><use href="#reg"/></svg></b><i class="dd off"></i>
        <i class="grip wide"></i>
        <b class="btn"><svg><use href="#rterrain"/></svg></b><b class="btn"><svg><use href="#rglobe"/></svg></b><i class="dd"></i><b class="btn"><svg><use href="#rgear"/></svg></b><b class="btn"><svg><use href="#rblob"/></svg></b><b class="btn"><svg><use href="#rab"/></svg></b><i class="dd"></i><b class="btn"><svg><use href="#rq"/></svg></b>
    </div>

    <div class="main">
        <div class="side">
            <div class="dock-title"><span>Layer</span><em class="dock-btn">❐</em><em class="dock-btn">×</em></div>
            <div class="dock-tools">
                <b class="tool"><svg><use href="#brush"/></svg></b><b class="tool"><svg><use href="#addgroup"/></svg></b><b class="tool off"><svg><use href="#eye"/></svg></b><b class="tool"><svg><use href="#filter"/></svg></b><b class="tool off"><svg><use href="#eps"/></svg></b><i class="dd off tight"></i><b class="tool"><svg><use href="#expand"/></svg></b><b class="tool"><svg><use href="#collapse"/></svg></b><b class="tool"><svg><use href="#rmlayer"/></svg></b>
            </div>
            <div class="tree layer-tree">
                <div class="row lv0"><i class="arr open"></i><i class="cb on"><svg><use href="#chk"/></svg></i><svg class="ti" viewBox="0 0 24 24"><use href="#groupic"/></svg><span>Flusso detrito</span></div>
                <div class="row lv1"><i class="arr none"></i><i class="cb"></i><i class="hatch"></i><span class="dim under">Area di studio</span></div>
                <div class="row lv1"><i class="arr open"></i><i class="cb on"><svg><use href="#chk"/></svg></i><svg class="ti" viewBox="0 0 24 24"><use href="#polyic"/></svg><span class="strong">Intensità completa</span></div>
                <div class="leg"><i class="cb on"><svg><use href="#chk"/></svg></i><i class="sw forte"></i><span>forte</span></div>
                <div class="leg"><i class="cb on"><svg><use href="#chk"/></svg></i><i class="sw medio"></i><span>medio</span></div>
                <div class="leg"><i class="cb on"><svg><use href="#chk"/></svg></i><i class="sw debole"></i><span>debole</span></div>
                <div class="leg"><i class="cb on"><svg><use href="#chk"/></svg></i><i class="sw impatto"></i><span>impatto presente</span></div>
                <div class="leg"><i class="cb on"><svg><use href="#chk"/></svg></i><i class="sw nessun"></i><span>nessun impatto</span></div>
                <div class="row lv1"><i class="arr open"></i><i class="cb on"><svg><use href="#chk"/></svg></i><svg class="ti" viewBox="0 0 24 24"><use href="#groupic"/></svg><span>Intensità (con filtri x visualizzazione scenari)</span></div>
                <div class="row lv2"><i class="arr shut"></i><i class="cb"></i><svg class="ti" viewBox="0 0 24 24"><use href="#polyic"/></svg><span class="dim">HQ 030</span><em class="ind"><svg viewBox="0 0 24 24"><use href="#funnel"/></svg></em></div>
                <div class="row lv2"><i class="arr shut"></i><i class="cb"></i><svg class="ti" viewBox="0 0 24 24"><use href="#polyic"/></svg><span class="dim">HQ 100</span><em class="ind"><svg viewBox="0 0 24 24"><use href="#funnel"/></svg></em></div>
                <div class="row lv2"><i class="arr shut"></i><i class="cb"></i><svg class="ti" viewBox="0 0 24 24"><use href="#polyic"/></svg><span class="dim">HQ 300</span><em class="ind"><svg viewBox="0 0 24 24"><use href="#funnel"/></svg></em></div>
                <div class="row lv2"><i class="arr shut"></i><i class="cb"></i><svg class="ti" viewBox="0 0 24 24"><use href="#polyic"/></svg><span class="dim">HQ &gt;300</span><em class="ind"><svg viewBox="0 0 24 24"><use href="#funnel"/></svg></em></div>
            </div>
            <div class="split-h"></div>
            <div class="dock-title"><span>Browser</span><em class="dock-btn">❐</em><em class="dock-btn">×</em></div>
            <div class="dock-tools tall">
                <b class="tool"><svg><use href="#addfav"/></svg></b><b class="tool"><svg><use href="#refresh"/></svg></b><b class="tool"><svg><use href="#filter"/></svg></b><b class="tool"><svg><use href="#collapse"/></svg></b><b class="tool"><svg><use href="#info"/></svg></b>
            </div>
            <div class="tree browser-tree">
                <div class="items">
                    <div class="brow"><i class="arr none"></i><svg class="ti" viewBox="0 0 24 24"><use href="#star"/></svg><span>Preferiti</span></div>
                    <div class="brow"><i class="arr shut"></i><svg class="ti" viewBox="0 0 24 24"><use href="#bmk"/></svg><span>Segnalibri Spaziali</span></div>
                    <div class="brow"><i class="arr shut"></i><svg class="ti" viewBox="0 0 24 24"><use href="#hprog"/></svg><span>Home Progetto</span></div>
                    <div class="brow"><i class="arr shut"></i><svg class="ti" viewBox="0 0 24 24"><use href="#home"/></svg><span>Home</span></div>
                    <div class="brow"><i class="arr shut"></i><svg class="ti" viewBox="0 0 24 24"><use href="#fold"/></svg><span>/</span></div>
                    <div class="brow"><i class="arr none"></i><svg class="ti" viewBox="0 0 24 24"><use href="#pkg"/></svg><span>GeoPackage</span></div>
                    <div class="brow"><i class="arr none"></i><svg class="ti" viewBox="0 0 24 24"><use href="#feat"/></svg><span>SpatiaLite</span></div>
                    <div class="brow"><i class="arr none"></i><svg class="ti" viewBox="0 0 24 24"><use href="#pg"/></svg><span>PostgreSQL</span></div>
                    <div class="brow"><i class="arr none"></i><svg class="ti" viewBox="0 0 24 24"><use href="#mssql"/></svg><span>MS SQL Server</span></div>
                    <div class="brow"><i class="arr none"></i><svg class="ti" viewBox="0 0 24 24"><use href="#wms"/></svg><span>WMS/WMTS</span></div>
                    <div class="brow"><i class="arr none"></i><svg class="ti" viewBox="0 0 24 24"><use href="#vtile"/></svg><span>Vector Tiles</span></div>
                    <div class="brow"><i class="arr open"></i><svg class="ti" viewBox="0 0 24 24"><use href="#xyz"/></svg><span>XYZ Tiles</span></div>
                    <div class="brow child"><svg class="ti" viewBox="0 0 24 24"><use href="#xyz"/></svg><span>Mapzen Global Terrain</span></div>
                    <div class="brow child"><svg class="ti" viewBox="0 0 24 24"><use href="#xyz"/></svg><span>OpenStreetMap</span></div>
                    <div class="brow"><i class="arr none"></i><svg class="ti" viewBox="0 0 24 24"><use href="#wcs"/></svg><span>WCS</span></div>
                    <div class="brow"><i class="arr none"></i><svg class="ti" viewBox="0 0 24 24"><use href="#wfs"/></svg><span>WFS / OGC API - Features</span></div>
                    <div class="brow"><i class="arr none"></i><svg class="ti" viewBox="0 0 24 24"><use href="#wfs"/></svg><span>ArcGIS REST Servers</span></div>
                </div>
                <div class="vscroll"><i class="sb-btn up"></i><i class="sb-track"></i><i class="sb-thumb"></i><i class="sb-btn dn"></i></div>
            </div>
        </div>
        <div class="split-v"></div>
        <div class="map">
            <svg class="canvas" viewBox="358 181 1242 809">
                <g filter="url(#org)">
                <!-- parte bassa: conoide -->
                <g transform="translate(440 420) scale(.40816 .33333)">
                    <path class="debole" d="M640,572 665,540 690,515 720,500 780,395 840,285 875,265 905,248 925,258 955,230 1060,195 1100,175 1060,158 1120,90 1170,100 1215,130 1210,175 1280,155 1320,165 1360,195 1400,230 1440,230 1470,245 1480,285 1445,340 1438,400 1460,435 1455,468 1420,465 1330,440 1255,435 1205,495 1100,490 1040,500 970,555 860,582 810,570 740,625 640,600z"/>
                    <path class="debole" d="M400,700 450,662 540,624 560,660 470,705 380,752 345,780 320,770z"/>
                    <path class="debole" d="M1290,60 1340,20 1530,0 1540,25 1510,65 1495,70 1480,40 1420,50 1400,80 1370,80 1330,60 1300,80z"/>
                    <path class="medio" d="M880,500 960,425 1050,350 1135,268 1285,240 1275,300 1152,365 1170,378 1285,345 1395,380 1385,437 1295,397 1085,465 1030,458 985,455 900,495z"/>
                    <path class="medio" d="M1235,237 1270,185 1320,190 1350,235 1330,247 1290,237z"/>
                    <path class="medio" d="M690,590 730,490 790,395 822,372 825,420 815,490 860,465 870,490 790,565z"/>
                    <path class="medio" d="M815,490 855,430 860,370 880,365 890,340 905,345 885,290 905,272 915,300 945,295 955,340 975,270 1005,260 1000,300 970,360 920,450 860,490z"/>
                    <path class="medio" d="M555,650 580,675 640,665 730,632 740,610 680,620z"/>
                    <path class="medio" d="M1060,160 1130,115 1200,120 1215,170 1190,195 1110,245 1095,200z"/>
                    <path class="medio" d="M610,590 700,570 800,530 830,560 740,605 620,620z"/>
                    <path class="medio" d="M1300,60 1340,25 1500,10 1520,40 1490,50 1430,40 1380,75 1350,60 1310,85z"/>
                    <path class="forte" d="M55,843 130,803 270,746 370,726 450,668 540,625 620,598 700,583 790,540 815,490 858,468 870,470 960,370 1010,290 1080,210 1110,170 1210,115 1290,60 1330,25 1400,5 1490,5 1500,30 1400,40 1330,60 1260,110 1200,150 1170,195 1110,240 1040,290 985,365 920,450 830,545 740,610 680,628 550,652 470,702 380,752 300,778 135,828 60,858z"/>
                    <path class="seam" d="M60,850 270,765 380,742 540,640 700,600 820,525 940,410 1000,325 1090,225 1180,150 1290,90 1400,22 1500,18"/>
                    <path class="river" d="M360,188 465,160 535,178 585,160 650,175 730,178 885,175 980,150 1040,170 1100,175"/>
                    <path class="thin" d="M1155,225 1165,258 1205,185M1310,175 1385,250 1408,310 1345,350 1350,362M960,440 1060,370 1100,300 1165,265M1040,410 1130,375 1200,300 1285,240M860,400 905,360 930,360 925,420M650,570 700,530 740,550"/>
                </g>
                <!-- parte alta: canale -->
                <g transform="translate(1040 340) scale(.34439 .33333)">
                    <path class="debole" d="M0,205 45,195 50,225 70,250 80,270 50,305 25,295 0,280z"/>
                    <path class="debole" d="M130,160 180,85 215,65 240,100 295,85 315,140 265,165 190,210 140,190z"/>
                    <path class="debole" d="M170,225 225,215 262,265 205,302 185,285z"/>
                    <path class="debole" d="M335,35 350,38 390,32 450,85 480,100 470,120 430,130 440,170 495,245 470,225 450,225 440,195 410,205 370,170 335,130 365,95 335,70z"/>
                    <path class="debole" d="M630,285 640,245 615,210 700,240 720,250 770,285 810,300 810,335 870,315 960,385 1010,370 1110,390 1200,360 1290,410 1365,410 1330,470 1290,485 1270,497 1285,465 1250,435 1190,400 1170,420 1130,440 1160,460 1155,485 1120,490 1085,465 1060,430 990,420 915,455 870,430 860,385 740,345z"/>
                    <path class="debole" d="M1415,255 1440,260 1488,298 1440,300 1415,345 1390,330 1430,290z"/>
                    <path class="medio" d="M0,225 45,215 70,255 50,295 25,285 0,275z"/>
                    <path class="medio" d="M60,210 100,165 135,150 150,200 200,200 340,125 360,115 360,150 300,190 270,195 200,215 90,235z"/>
                    <path class="medio" d="M170,230 210,222 218,265 190,290 175,260z"/>
                    <path class="medio" d="M345,75 400,60 425,55 452,95 420,125 425,150 450,185 405,195 375,165 350,115 360,100z"/>
                    <path class="medio" d="M560,145 590,150 720,245 700,300 770,290 800,320 830,345 870,320 960,395 1100,395 1130,405 1170,410 1130,440 1100,460 1060,430 985,425 920,450 880,420 865,380 760,345 650,285 640,270 650,250 630,220z"/>
                    <path class="medio" d="M1290,420 1300,400 1360,410 1330,470 1290,485 1275,495 1300,455z"/>
                    <path class="medio" d="M1420,258 1445,265 1480,292 1440,298 1415,345 1400,345 1295,430 1292,410 1390,322 1430,290z"/>
                    <path class="medio" d="M1170,380 1200,365 1290,415 1250,410 1200,395z"/>
                    <path class="forte" d="M370,145 388,115 402,160 380,165z"/>
                    <path class="forte" d="M890,370 945,385 935,420 910,440 895,420z"/>
                    <path class="forte" d="M660,240 700,240 690,285 670,280z"/>
                    <path class="forte" d="M1300,440 1320,445 1305,460z"/>
                    <path class="band" d="M0,262 50,240 90,220 180,215 260,175 370,145 420,130 480,130 560,160 650,210 700,240 690,285 740,310 775,290 800,320 830,345 870,330 930,375 960,395 1040,395 1110,405 1160,380 1210,385 1300,440 1320,420 1430,290"/>
                    <path class="core" d="M0,262 50,240 90,220 180,215 260,175 370,145 420,130 480,130 560,160 650,210 700,240 690,285 740,310 775,290 800,320 830,345 870,330 930,375 960,395 1040,395 1110,405 1160,380 1210,385 1300,440 1320,420 1430,290"/>
                </g>
                </g>
            </svg>
        </div>
    </div>

    <div class="status">
        <label class="search"><svg viewBox="0 0 24 24"><circle cx="10" cy="10" r="7" fill="none" stroke="#888" stroke-width="1.800"/><path d="M15 15l7 7" stroke="#888" stroke-width="1.800"/></svg><span>Digita per localizzare (Ctrl+K)</span></label>
        <span class="st-l st-coord">Coordinata</span>
        <span class="field f-coord">2699599, 1113393</span>
        <svg class="st-i" viewBox="0 0 24 24"><use href="#noclick"/></svg>
        <span class="st-l st-scala">Scala</span>
        <span class="field f-scala">1:5242<i class="combo"></i></span>
        <svg class="st-i st-lock" viewBox="0 0 24 24"><use href="#lock"/></svg>
        <span class="st-l st-lente">Lente d'ingrandimento</span>
        <span class="field f-spin">100%<i class="spin"></i></span>
        <span class="st-l st-rot">Rotazione</span>
        <span class="field f-spin">0.0 °<i class="spin"></i></span>
        <i class="cb on st-cb"><svg><use href="#chk"/></svg></i>
        <span class="st-l st-vis">Visualizza</span>
        <svg class="st-i st-globe" viewBox="0 0 24 24"><use href="#globe"/></svg>
        <span class="st-l st-epsg">EPSG:2056</span>
        <svg class="st-i st-msg" viewBox="0 0 24 24"><use href="#msg"/></svg>
    </div>
</div>
</body>
</html>
```

FILE: styles.css
```css
* {
    box-sizing: border-box;
}

html, body {
    height: 100%;
}

body {
    margin: 0;
    background: #5a6064;
    font-family: "Noto Sans", sans-serif;
    font-size: 12px;
    color: #1d1d1d;
    overflow: hidden;
}

.defs {
    position: absolute;
}

.app {
    display: flex;
    flex-direction: column;
    height: 1021px;
    margin: 1px 0 0 3px;
    background: #efefef;
}

/* menu */
.menubar {
    display: flex;
    height: 22px;
    padding: 0 0 1px 2.500px;
    align-items: center;
    background: #f0f0f0;
    font-size: 12px;
}

.menubar span {
    padding: 0 7.300px;
}

/* toolbars */
.toolbar {
    display: flex;
    flex: none;
    align-items: center;
    height: 39px;
    border-top: 1px solid #cfcfcf;
    background: linear-gradient(#fafafa, #ececec);
}

.toolbar.top {
    height: 38px;
}

.toolbar.last {
    border-bottom: 1px solid #c4c4c4;
}

.btn {
    display: flex;
    flex: none;
    width: 33px;
    height: 31px;
    align-items: center;
    justify-content: center;
    border: 1px solid transparent;
    border-radius: 2px;
}

.btn svg {
    width: 24px;
    height: 24px;
    overflow: visible;
}

.btn.active {
    width: 31px;
    margin: 0 1px;
    background: #d9d9d9;
    border-color: #b5b5b5;
}

.off svg {
    opacity: .38;
    filter: grayscale(1);
}

.grip {
    flex: none;
    width: 16px;
    height: 22px;
    background-image: radial-gradient(#a8a8a8 .7px, transparent .8px);
    background-size: 3px 3px;
    background-repeat: repeat;
    background-clip: content-box;
    padding: 0 5px;
}

.grip:first-child {
    width: 12px;
    padding: 0 3px;
}

.grip.hide {
    background: none;
}

.grip.wide {
    width: 20px;
    padding: 0 7px;
}

.dd {
    flex: none;
    width: 11px;
    height: 0;
    position: relative;
}

.dd.wide {
    width: 14px;
}

.dd::after {
    content: "";
    position: absolute;
    top: -2px;
    left: 1px;
    border-left: 4px solid transparent;
    border-right: 4px solid transparent;
    border-top: 5px solid #555;
}

.dd.off::after {
    border-top-color: #bbb;
}

.dd.tight {
    width: 12px;
}

.sep {
    flex: none;
    width: 7px;
    height: 24px;
    background: linear-gradient(#c8c8c8, #c8c8c8) no-repeat center / 1px 100%;
}

/* main */
.main {
    display: flex;
    flex: 1;
    min-height: 0;
}

.side {
    display: flex;
    flex-direction: column;
    width: 347px;
    flex: none;
}

.dock-title {
    display: flex;
    align-items: center;
    height: 22px;
    flex: none;
    padding: 0 1px 0 4px;
}

.dock-title span {
    flex: 1;
}

.dock-btn {
    width: 13px;
    height: 13px;
    margin-left: 2px;
    border: 1px solid #666;
    border-radius: 2px;
    font: 10px/10px "DejaVu Sans", sans-serif;
    text-align: center;
    color: #444;
}

.dock-tools {
    display: flex;
    align-items: center;
    flex: none;
    height: 29px;
    padding: 0 0 3px 3.500px;
}

.dock-tools.tall {
    height: 30px;
}

.tool {
    display: flex;
    flex: none;
    width: 25px;
    justify-content: center;
}

.tool svg {
    width: 20px;
    height: 20px;
    overflow: hidden;
}

.tool svg use {
    transform: scale(.85);
}

.tree {
    background: #fff;
    border: 1px solid #b9b9b9;
    border-left-color: #c8c8c8;
}

.layer-tree {
    height: 391px;
    flex: none;
    font-size: 12px;
}

.row, .brow, .leg {
    display: flex;
    align-items: center;
    height: 19px;
    white-space: nowrap;
}

.leg {
    height: 20px;
    padding-left: 63px;
}

.lv0 {
    padding-left: 4px;
}

.lv1 {
    padding-left: 24px;
}

.lv2 {
    padding-left: 44px;
    position: relative;
}

.arr {
    flex: none;
    width: 12px;
    height: 12px;
    margin-right: 7px;
    position: relative;
}

.arr::after {
    content: "";
    position: absolute;
    left: 2px;
    top: 3px;
}

.arr.open::after {
    border-left: 4px solid transparent;
    border-right: 4px solid transparent;
    border-top: 5px solid #555;
}

.arr.shut::after {
    left: 4px;
    top: 2px;
    border-top: 4px solid transparent;
    border-bottom: 4px solid transparent;
    border-left: 5px solid #555;
}

.cb {
    display: block;
    flex: none;
    width: 14px;
    height: 14px;
    margin-right: 6px;
    background: #fff;
    border: 1px solid #b8b8b8;
    border-radius: 1px;
}

.cb.on {
    border-color: #8a8a8a;
}

.cb svg {
    display: block;
    width: 14px;
    height: 14px;
    margin: -1px;
}

.ti {
    flex: none;
    width: 15px;
    height: 15px;
    margin-right: 7px;
    overflow: visible;
}

.hatch {
    flex: none;
    width: 16px;
    height: 16px;
    margin-right: 6px;
    border: 1px solid #c6c6c6;
    background: repeating-linear-gradient(135deg, #fff 0 6px, #c6c6c6 6px 7px);
}

.dim {
    color: #7b7b7b;
    font-weight: 700;
    font-style: italic;
}

.under {
    text-decoration: underline;
}

.strong {
    font-weight: 700;
}

.sw {
    flex: none;
    width: 18px;
    height: 18px;
    margin-right: 6px;
    border: 1px solid #aaa;
}

.forte { background: #38a000; }
.medio { background: #55d400; }
.debole { background: #ccff66; }
.impatto { background: #e6bbff; }

.nessun {
    background: repeating-linear-gradient(135deg, #fff 0 7px, #f2f2a0 7px 8px);
    border-color: #d6d6d6;
}

.ind {
    position: absolute;
    left: 323px;
    top: 0;
    width: 18px;
    height: 18px;
    background: #e4e4e4;
}

.ind svg {
    display: block;
    width: 18px;
    height: 18px;
}

.split-h {
    height: 5px;
    flex: none;
    background: radial-gradient(#aaa .6px, transparent .7px) center / 3px 3px no-repeat;
    background-size: 3px 3px;
    background-repeat: repeat-x;
    background-clip: content-box;
    padding: 1px 165px;
}

.browser-tree {
    display: flex;
    flex: 1;
    min-height: 0;
    overflow: hidden;
}

.items {
    flex: 1;
    overflow: hidden;
}

.brow {
    padding-left: 2px;
}

.brow .arr {
    width: 12px;
    margin-right: 5px;
}

.brow .ti {
    width: 16px;
    height: 16px;
    margin-right: 6px;
}

.brow.child {
    padding-left: 35px;
}

.vscroll {
    display: flex;
    flex-direction: column;
    flex: none;
    width: 14px;
    background: #f4f4f4;
    border-left: 1px solid #d0d0d0;
}

.sb-btn {
    flex: none;
    height: 14px;
    position: relative;
    background: #f0f0f0;
}

.sb-btn::after {
    content: "";
    position: absolute;
    left: 2px;
    top: 4px;
    border-left: 4px solid transparent;
    border-right: 4px solid transparent;
}

.sb-btn.up::after {
    border-bottom: 5px solid #444;
}

.sb-btn.dn::after {
    border-top: 5px solid #444;
}

.sb-track {
    flex: 1;
}

.sb-thumb {
    flex: none;
    height: 17px;
    background: #dcdcdc;
}

.split-v {
    width: 7px;
    flex: none;
    position: relative;
}

.split-v::after {
    content: "";
    position: absolute;
    left: 2px;
    top: 400px;
    width: 3px;
    height: 15px;
    background: radial-gradient(#aaa .6px, transparent .7px) 0 0 / 3px 3px;
}

.map {
    flex: 1;
    min-width: 0;
    margin-top: 2px;
    background: #fff;
    border: 1px solid #bdbdbd;
    border-right: 0;
}

.canvas {
    display: block;
    width: 100%;
    height: 100%;
}

.canvas path {
    vector-effect: non-scaling-stroke;
    stroke-linejoin: round;
    stroke-linecap: round;
}

.canvas .debole {
    fill: #ccff6e;
    stroke: #9a9f8e;
    stroke-width: .8;
}

.canvas .medio {
    fill: #55d400;
    stroke: #8f9a80;
    stroke-width: .7;
}

.canvas .forte {
    fill: #38a000;
    stroke: #8c8c8c;
    stroke-width: 1.500;
}

.canvas .seam {
    fill: none;
    stroke: #7d9a6e;
    stroke-width: .8;
    opacity: .7;
}

.canvas .river {
    fill: none;
    stroke: #4a9a20;
    stroke-width: 2.500;
}

.canvas .thin {
    fill: none;
    stroke: #9a9f8e;
    stroke-width: .7;
}

.canvas .band {
    fill: none;
    stroke: #8a8f80;
    stroke-width: 6.500;
}

.canvas .core {
    fill: none;
    stroke: #38a000;
    stroke-width: 3.500;
}

/* status bar */
.status {
    display: flex;
    align-items: center;
    flex: none;
    height: 32px;
    padding-left: 4px;
    font-size: 10px;
    white-space: nowrap;
}

.search {
    display: flex;
    align-items: center;
    width: 291px;
    height: 24px;
    padding-left: 8px;
    background: #fff;
    border: 1px solid #b8b8b8;
    border-radius: 3px;
    font-size: 12px;
    color: #9a9a9a;
}

.search svg {
    width: 14px;
    height: 14px;
    margin-right: 7px;
}

.st-l {
    flex: none;
    color: #333;
    letter-spacing: -.4px;
}

.st-coord { margin-left: 454px; width: 50.500px; }
.st-scala { margin-left: 2px; width: 25px; }
.st-lente { margin-left: 7px; width: 100px; }
.st-rot { margin-left: 9px; width: 51px; }
.st-vis { width: 56px; }
.st-epsg { width: 63px; }

.field {
    display: flex;
    flex: none;
    align-items: center;
    height: 22px;
    padding-left: 4px;
    background: #fff;
    border: 1px solid #b8b8b8;
    border-radius: 3px;
    position: relative;
    letter-spacing: -.3px;
}

.f-coord { width: 89px; }
.f-scala { width: 71px; }
.f-spin { width: 87px; }

.combo {
    position: absolute;
    right: 0;
    top: 0;
    width: 20px;
    height: 20px;
    background: #f6f6f6;
    border-left: 1px solid #cfcfcf;
}

.combo::after {
    content: "";
    position: absolute;
    left: 5px;
    top: 8px;
    border-left: 4px solid transparent;
    border-right: 4px solid transparent;
    border-top: 5px solid #666;
}

.spin {
    position: absolute;
    right: 0;
    top: 0;
    width: 14px;
    height: 20px;
    background: #f6f6f6;
}

.spin::before, .spin::after {
    content: "";
    position: absolute;
    left: 3px;
    border-left: 4px solid transparent;
    border-right: 4px solid transparent;
}

.spin::before {
    top: 3px;
    border-bottom: 5px solid #555;
}

.spin::after {
    bottom: 3px;
    border-top: 5px solid #555;
}

.st-i {
    flex: none;
    width: 18px;
    height: 18px;
    margin: 0 11.500px 0 2px;
}

.st-lock {
    width: 16px;
    height: 16px;
    margin: 0 0 0 11px;
}

.st-cb {
    margin: 0 5px 0 6px;
}

.st-globe {
    width: 14px;
    height: 14px;
    margin: 0 5px 0 0;
}

.st-msg {
    width: 20px;
    height: 20px;
    margin: 0;
}

/* icon text */
.ic-t {
    font: 11px "Liberation Sans", sans-serif;
    fill: #222;
}

.ic-s {
    font-size: 7px;
    fill: #555;
}

.ic-b {
    font-size: 8.500px;
    font-weight: 700;
}

.ic-r {
    fill: #d33;
}

.ic-g {
    fill: #888;
}

.ic-w {
    font: italic 700 16px "Liberation Serif", serif;
    fill: #fff;
}

.ic-wm {
    font-size: 14px;
}

.ic-k {
    font: 700 15px "Liberation Sans", sans-serif;
    fill: #111;
}

.ic-e {
    font: 16px "DejaVu Sans", sans-serif;
    fill: #999;
}
```
